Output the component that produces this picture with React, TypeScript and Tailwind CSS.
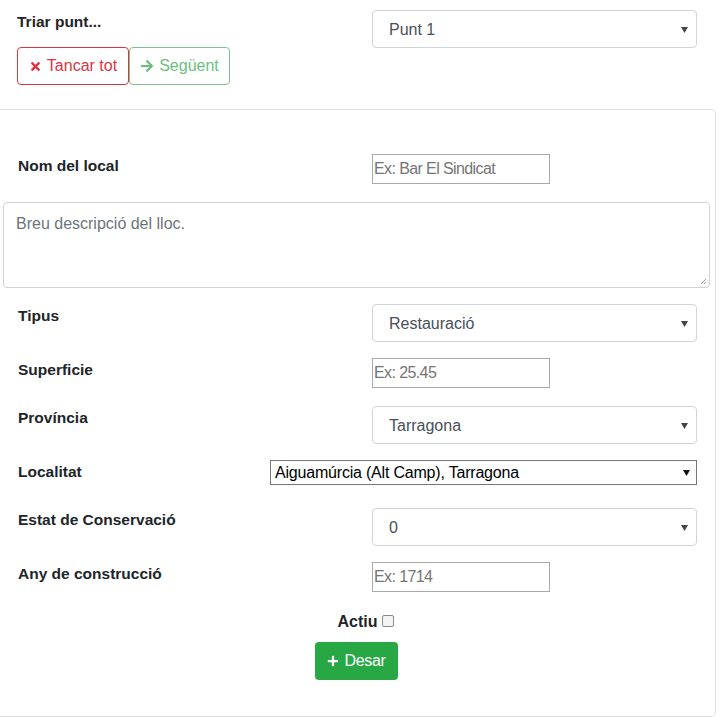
import React from "react";
import { FaTimes, FaArrowRight, FaPlus } from "react-icons/fa";

const font = { fontFamily: '"Liberation Sans", Arial, sans-serif' };

function Caret({ dark = false }: { dark?: boolean }) {
  return (
    <svg width="7" height="6" viewBox="0 0 7 6" className="shrink-0">
      <path d="M0 0 L7 0 L3.5 6 Z" fill={dark ? "#111" : "#444"} />
    </svg>
  );
}

function BsSelect({ value }: { value: string }) {
  return (
    <div className="flex h-[38px] w-[325px] items-center justify-between rounded-[4px] border border-[#ced4da] bg-white pl-[16px] pr-[8px] pt-[2px] text-[16px] text-[#495057]">
      <span>{value}</span>
      <Caret />
    </div>
  );
}

function PlainInput({ placeholder }: { placeholder: string }) {
  return (
    <div className="flex h-[30px] w-[178px] items-center border border-[#a9a9a9] bg-white pl-[1px] text-[16px] tracking-[-0.6px] text-[#757575]">
      {placeholder}
    </div>
  );
}

function Row({
  label,
  children,
  wide = true,
}: {
  label: string;
  children: React.ReactNode;
  wide?: boolean;
}) {
  return (
    <div className="mb-[16px] flex items-start">
      <div className="mb-[8px] h-[24px] w-[18px] shrink-0" />
      <div
        className={
          wide
            ? "h-[24px] w-[354px] shrink-0 text-[15.5px] font-bold leading-[24px] text-[#212529]"
            : "h-[24px] w-[252px] shrink-0 text-[15.5px] font-bold leading-[24px] text-[#212529]"
        }
      >
        {label}
      </div>
      {children}
    </div>
  );
}

export default function App() {
  return (
    <div className="w-[719px] bg-white text-[#212529]" style={font}>
      {/* top section */}
      <div className="flex pt-[10px]">
        <div className="w-[372px] shrink-0 pl-[17px]">
          <div className="h-[24px] text-[15.5px] font-bold leading-[24px]">Triar punt...</div>
          <div className="mt-[13px] flex">
            <div className="flex h-[38px] w-[112px] items-center justify-center gap-[5px] rounded-[4px] border border-[#dc3545] text-[16px] text-[#dc3545]">
              <FaTimes className="h-[13px] w-[13px]" />
              <span>Tancar tot</span>
            </div>
            <div className="flex h-[38px] w-[101px] items-center justify-center gap-[5px] rounded-[4px] border border-[#7cc48c] text-[16px] text-[#6abf7e]">
              <FaArrowRight className="h-[14px] w-[14px]" />
              <span>Següent</span>
            </div>
          </div>
        </div>
        <div>
          <BsSelect value="Punt 1" />
        </div>
      </div>

      {/* card */}
      <div className="mt-[24px] w-[716px] rounded-r-[5px] border-y border-r border-[#dfdfdf] pb-[36px] pt-[44px]">
        <Row label="Nom del local">
          <PlainInput placeholder="Ex: Bar El Sindicat" />
        </Row>

        <div className="mb-[16px] pl-[3px]">
          <div className="relative h-[86px] w-[707px] rounded-[4px] border border-[#ced4da] px-[12px] pt-[9px] text-[16px] text-[#6c757d]">
            Breu descripció del lloc.
            <svg width="7" height="7" viewBox="0 0 7 7" className="absolute bottom-[2px] right-[2px]">
              <path d="M6 1 L1 6 M6 4 L4 6" stroke="#999" strokeWidth="1" />
            </svg>
          </div>
        </div>

        <Row label="Tipus">
          <BsSelect value="Restauració" />
        </Row>
        <Row label="Superficie">
          <PlainInput placeholder="Ex: 25.45" />
        </Row>
        <Row label="Província">
          <BsSelect value="Tarragona" />
        </Row>
        <Row label="Localitat" wide={false}>
          <div className="flex h-[25px] w-[427px] items-center justify-between border border-[#767676] bg-white pl-[4px] pr-[6px] text-[16px] tracking-[-0.2px] text-black">
            <span>Aiguamúrcia (Alt Camp), Tarragona</span>
            <Caret dark />
          </div>
        </Row>
        <Row label="Estat de Conservació">
          <BsSelect value="0" />
        </Row>
        <Row label="Any de construcció">
          <PlainInput placeholder="Ex: 1714" />
        </Row>

        <div className="flex h-[24px] items-center justify-center pl-[16px]">
          <span className="text-[16px] font-bold leading-[24px]">Actiu</span>
          <span className="ml-[4px] mt-[-2px] h-[12px] w-[12px] rounded-[2px] border border-[#8a8a8a] bg-[#f4f4f4]" />
        </div>

        <div className="mt-[8px] flex justify-center">
          <div className="ml-[-2px] flex h-[38px] w-[83px] items-center justify-center gap-[5px] rounded-[4px] bg-[#28a745] text-[16px] text-white">
            <FaPlus className="h-[12px] w-[12px]" />
            <span className="tracking-[-0.3px]">Desar</span>
          </div>
        </div>
      </div>
    </div>
  );
}
